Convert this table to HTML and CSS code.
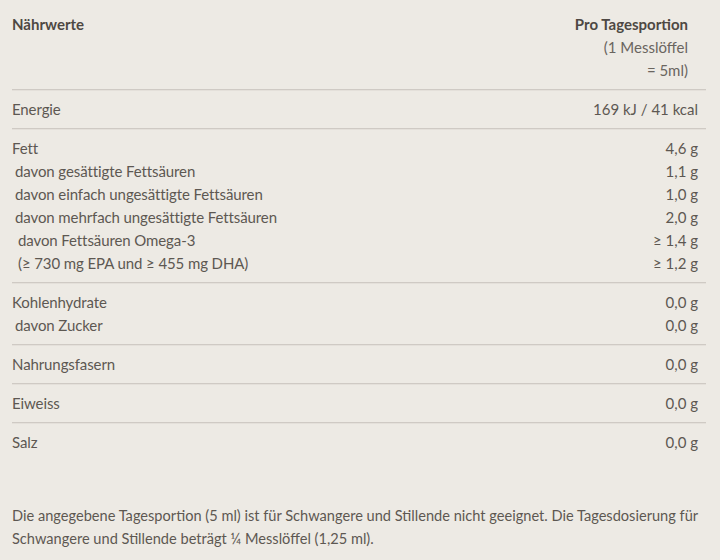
FILE: index.html
```html
<!DOCTYPE html>
<html lang="de">
<head>
<meta charset="utf-8">
<title>Nährwerte</title>
<link rel="stylesheet" href="styles.css">
</head>
<body>
<div class="page">
  <div class="table">
    <div class="group group-head">
      <div class="row">
        <span class="label head">Nährwerte</span>
        <span class="value head head-value">Pro Tagesportion<br><span class="sub">(1 Messlöffel<br>= 5ml)</span></span>
      </div>
    </div>
    <div class="group">
      <div class="row"><span class="label">Energie</span><span class="value">169 kJ / 41 kcal</span></div>
    </div>
    <div class="group">
      <div class="row"><span class="label">Fett</span><span class="value">4,6 g</span></div>
      <div class="row"><span class="label indent1">davon gesättigte Fettsäuren</span><span class="value">1,1 g</span></div>
      <div class="row"><span class="label indent1">davon einfach ungesättigte Fettsäuren</span><span class="value">1,0 g</span></div>
      <div class="row"><span class="label indent1">davon mehrfach ungesättigte Fettsäuren</span><span class="value">2,0 g</span></div>
      <div class="row"><span class="label indent2">davon Fettsäuren Omega-3</span><span class="value">≥ 1,4 g</span></div>
      <div class="row"><span class="label indent2">(≥ 730 mg EPA und ≥ 455 mg DHA)</span><span class="value">≥ 1,2 g</span></div>
    </div>
    <div class="group">
      <div class="row"><span class="label">Kohlenhydrate</span><span class="value">0,0 g</span></div>
      <div class="row"><span class="label indent1">davon Zucker</span><span class="value">0,0 g</span></div>
    </div>
    <div class="group">
      <div class="row"><span class="label">Nahrungsfasern</span><span class="value">0,0 g</span></div>
    </div>
    <div class="group">
      <div class="row"><span class="label">Eiweiss</span><span class="value">0,0 g</span></div>
    </div>
    <div class="group group-last">
      <div class="row"><span class="label">Salz</span><span class="value">0,0 g</span></div>
    </div>
  </div>
  <p class="note">Die angegebene Tagesportion (5 ml) ist für Schwangere und Stillende nicht geeignet. Die Tagesdosierung für Schwangere und Stillende beträgt ¼ Messlöffel (1,25 ml).</p>
</div>
</body>
</html>
```

FILE: styles.css
```css
html, body {
  margin: 0;
  padding: 0;
  background: #edeae4;
}

body {
  font-family: Lato, "Source Sans Pro", "Open Sans", sans-serif;
  font-size: 15px;
  line-height: 23px;
  color: #5d5852;
}

.page {
  padding: 13px 14px 0 12px;
}

.table {
  display: flex;
  flex-direction: column;
}

.group {
  padding: 7px 8px 7px 0;
  border-top: 1px solid #e4e0da;
  border-bottom: 1px solid #cfcac4;
}

.group-head {
  padding-top: 0;
  border-top: none;
}

.group-last {
  border-bottom: none;
}

.row {
  display: flex;
  justify-content: space-between;
  align-items: flex-start;
}

.label {
  white-space: nowrap;
  letter-spacing: -0.1px;
}

.value {
  text-align: right;
  white-space: nowrap;
}

.head {
  font-weight: 700;
  color: #4d4843;
  letter-spacing: 0;
}

.head-value {
  padding-right: 10px;
}

.sub {
  font-weight: 400;
  color: #6a655f;
}

.indent1 {
  padding-left: 3px;
}

.indent2 {
  padding-left: 6px;
}

.note {
  margin: 43px 0 0;
  font-size: 14.6px;
  line-height: 23px;
}
```
